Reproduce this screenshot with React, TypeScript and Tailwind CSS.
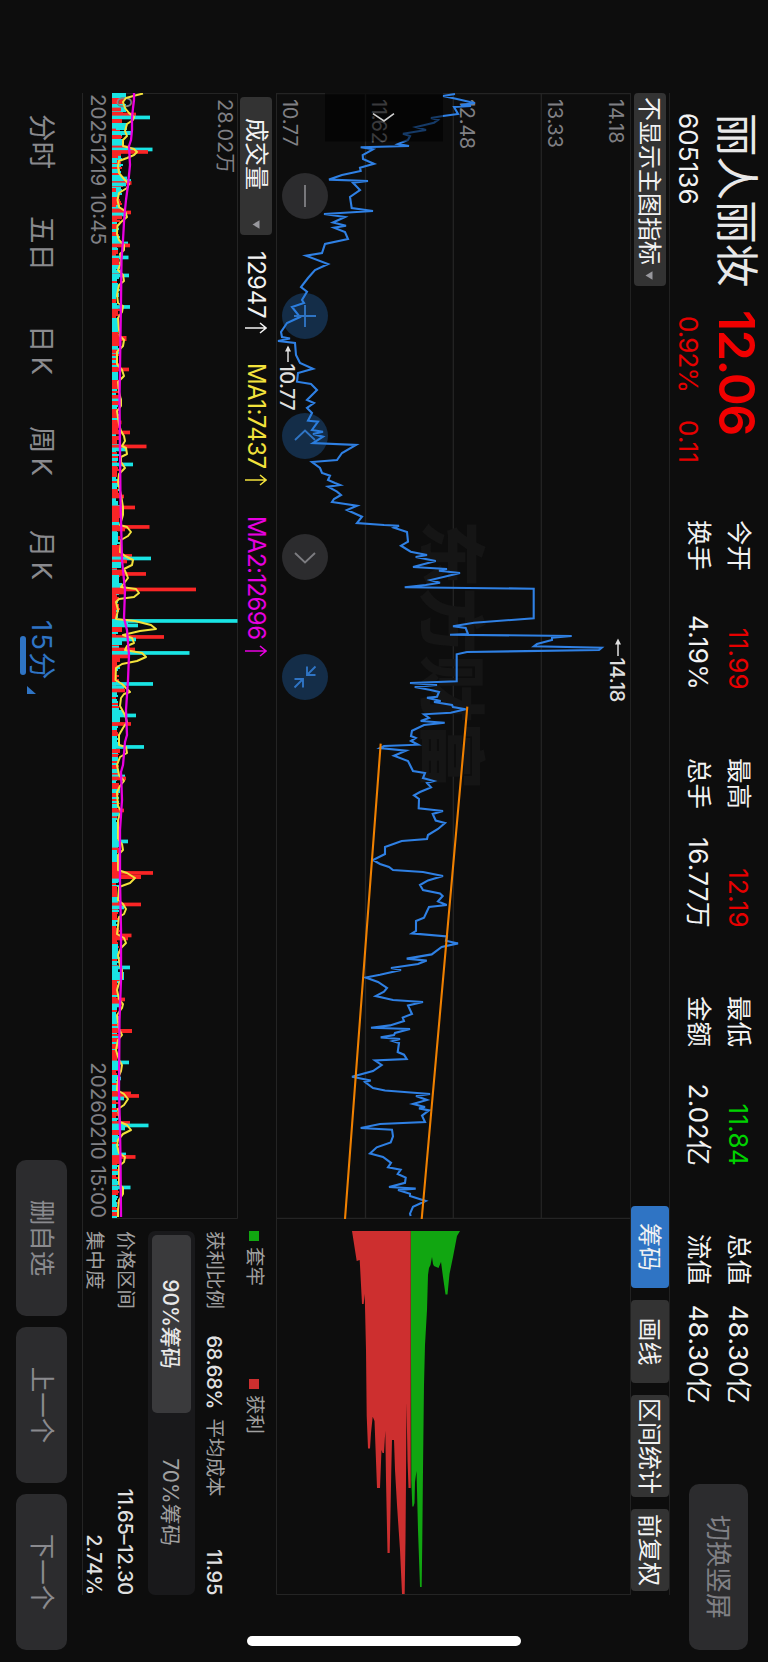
import React from 'react';

type Stat = {
  label: string;
  value: string;
  tone?: string;
};

// time offset, level
const PRICE_POINTS =
  '94,455 96,443 99,457 102,470 103,475 105,461 106,471 107,454 114,458 116,443 118,431 120,438 122.7,434 127,416 130,426 133.7,403 136,410 140,408 144,398 146,409 147.3,360.7 149.3,373 155,362.7 159,363 163.7,374 167.7,360 171,360.7 175,342 179.6,329 181,368 182.7,353 190,360 197,350 208,351.7 211,373 214,324 217,345 222.5,333 225.7,346 227.7,334 232,345 239,348 244,325 253,322 255.7,306 264,328 270,315 278,308 287,301 291.7,307 300,302 303,304 307,292 317,300 323,287 332,281 337,282 338.5,290 341,278 343,295 355,296 363,300 368.7,313 373,298 381.7,297 384,311 390,317 400,307 403,314 408,307 413,312 420.7,308 421.7,318 430,312 431.7,323 434,313 436.7,323 443,313 445,356 453,342 460,337 462,312 468,320 473,322 475.7,330 480,328 483,335 485,340 486.7,328 491.7,337 495,341 499,334 502,332 505.7,357 510,347 516.7,362 523,357 525,384 525.7,399 527.7,394 532,407 541.7,408 545.7,401 551.7,410.7 555,427 557,415.7 561,435.7 567,413 569,447 570.7,439 573,460 580,430.7 582.7,440 585,425.7 587.3,404.7 588.7,533.7 618.3,533.7 622.7,474 626.3,453 628,465.7 634,468 634.7,450 636,571.7 637.7,552 640,552 644,537 646.3,534 647.7,601.7 650,599 652,467 654.3,456.7 681.3,456.7 683,410 685,437 687,414.7 690,430.7 692,439 696.7,437 697.7,427 701,440.7 702,434 705,452 707,453 709.3,465.7 712.7,450.7 714.3,424 718,429 721,420.7 722.7,444.7 725,424 730.7,412 736,411 738,415.7 741,411 744.7,418 746,384 748,380 750.6,406 755.8,394 761,408 771,413 773,425 778,423 781,433.7 783,427 787.4,431 792,420 795.4,414 799,419 808.4,418.7 811,443 814,432.7 820.5,435.7 823,445 829,438 835,428 839,427 841,401.7 847,385 854,385 860,373 864,380 867,389 870,393 872,423 876,443 880.4,428 885,420 890,423 893.5,440 896,442.7 901.4,438 905,446.7 907,429 917.6,424 921,416 931,416 933.4,412 936.5,447 940.7,446 943.4,458 947,441.7 954.4,431.7 958.6,406.7 960.6,426.7 964,418 968,391 970,401 974.8,380 977.5,365.7 982,378 988,387 991.6,384 996,375.7 1000,393 1002,423 1005.4,408 1014,412 1017.5,402.7 1021,404 1025.4,390 1027.8,371 1029,410 1033,395 1035,394 1037.4,380.7 1039,400 1041,392.7 1043,399 1052,397.7 1054.7,404 1059,406.7 1060.5,375 1065,381.7 1071,373 1076.7,352 1080.5,370.7 1082,365 1088,373 1090.5,385 1094,430 1096,416 1100,427 1104,413 1107,425 1108.4,419 1110.4,429 1115.6,422 1122,425 1124,380 1128,360.7 1129.7,392 1136.3,393 1142.5,390.7 1147.3,376.7 1153.5,370 1157,383 1162.8,391 1167.3,388 1169.7,400.7 1174,397.7 1177.6,405.7 1182.8,405 1187,389 1188.6,415.7 1190,398 1193.8,410 1196,410 1201,425.7 1206.9,413 1213.7,410 1216,410.7';

const MA1_POINTS =
  '93.5,143 95,137 98,126 102,123 108,125 113,129 117,134 120,133 124,127 131,125 136,127 140,123 146,123 149,134 152,137 155,134 158,127 161,119 166,118 173,119 179,124 184,129 188,127 193,119 200,117.5 207,119 211,125 217,127 222,121 226,117.5 234,117 240,119 245,124 250,124 254,120 258,121 265,120 270,118 275,123 281,124 285,119 295,117 303,118 306,123 312,122 318,118 330,119 336,120 340,124 346,123 352,117 364,117 370,122 376,124 382,118 392,119 400,121 406,121 411,117 424,119 431,121 436,124 441,125 446,122 448,126 454,127 457,121 462,121 468,125 474,119 482,118 495,121 507,123 515,123 525,120 527,127 532,131 536,128 540,121 552,120 556,125 560,133 565,132 569,124 573,126 578,128 582,125 587,121 589,136 593,139 597,134 599,119 602,116 610,118 619,116 621,135 625,151 629,156 631,140 635,123 638,132 643,134 646,127 650,125 653,142 657,146 661,137 664,122 668,116 680,115.5 684,122 688,126 692,130 694,124 698,121 706,120 715,125 722,127 728,123 735,119 745,119 747,126 753,127 757,120 765,117 775,119 781,124 786,120 792,117 806,118 811,121 820,118 839,118 844,122 850,123 855,118 870,118 873,127 878,135 883,130 887,119 900,118 904,123 909,126 914,124 917,119 934,117 938,124 943,126 948,121 955,118 966,120 970,122 978,122 983,119 990,117 999,119 1004,123 1008,122 1015,117 1029,119 1035,122 1040,118 1050,116 1060,119 1065,122 1071,121 1078,118 1090,117 1094,124 1099,128 1105,124 1109,118 1122,120 1125,127 1130,131 1134,123 1140,118 1145,117 1153,119 1157,125 1162,124 1166,119 1184,119 1188,123 1194,123 1200,119 1210,118 1217,118';

const MA2_POINTS =
  '93,134 100,134 108,133 118,132 130,132 140,131 146,129 165,130 185,128 200,126 210,125 222,124 240,123 260,121.5 300,121 400,119.5 500,120.5 560,122 590,125 618,124 630,127 655,129 680,128 710,126 735,127 742,125 765,123 772,121 800,122 830,120 880,120 930,121 980,121 1020,119.5 1090,119 1130,120 1160,120.5 1217,121';

const TRAPPED_POINTS =
  '1231,410.7 1231,460 1236,457 1257,453 1274,449.5 1294.5,447.5 1294.5,445.5 1277,443 1262,441 1268,438.5 1266,434 1264,433 1257,432 1265,430.5 1268,429 1275,428 1310,427 1345,425 1385,424 1410,423.7 1470,423 1540,422.3 1587,421.7 1587,420 1530,418 1471,416.5 1482,415 1503,414.5 1506.5,413.5 1506.5,412.3 1480,411.3';

const PROFIT_POINTS =
  '1231,410.7 1488,410.7 1488,408.5 1460,407.5 1403,406.5 1480,406 1540,405.5 1594,404.7 1594,402 1550,400 1505,397 1470,395 1440,394 1440,392 1470,391.3 1553,389.7 1553,387.5 1480,386 1431,385.3 1453,384 1453,382.5 1450,381.5 1488,380 1488,377 1421,374.5 1416.7,372.7 1433,371 1448.5,370 1448.5,368 1416,366.7 1350,366 1294,364.7 1304,363.7 1304,362 1260,359.7 1261,356.7 1231,352';

const RISE = '#fa2525';
const FALL = '#19e4e4';

// [offset, width, height, rising]
const VOLUME_RUNS: [number, number, number, boolean][] = [
  [93, 5, 14, false], [98, 6, 12, true], [104, 8, 14, false], [108, 2, 9, true], [113, 2, 24, true],
  [116, 3, 38, false], [119, 4, 10, true], [123, 7, 15, false], [129, 2, 4, true], [131, 4, 19, false],
  [135, 4, 9, true], [139, 7, 11, false], [146, 2, 16, true], [148, 3, 40.5, false], [150.5, 2, 36, true],
  [152.5, 3, 9, true], [155, 3, 6, true], [158, 5, 5, false], [177, 3, 15, false], [179.5, 2, 19, false],
  [181.5, 2, 19.5, true], [183, 3, 14, false], [188, 4, 4, true], [200, 7, 4, true], [209, 3, 14, true],
  [211, 2, 19, true], [213, 3, 15, false], [216, 3, 10, true], [224, 5, 6, true], [242, 2, 16, false],
  [244, 2.5, 18, true], [256, 2.5, 16.5, false], [258, 7, 7, true], [270, 3, 9, false], [274, 3, 17, false],
  [305.5, 3, 18, false], [309, 7, 6, true], [320, 12, 6, false], [336, 5, 14.5, true], [341, 3, 8, true],
  [350, 3, 5, true], [368, 3, 17, true], [372, 8, 6, false], [383, 6, 6, true], [399, 3, 10, false],
  [401, 4, 7, true], [411, 7, 5, true], [421, 2.5, 9.5, true], [431, 3, 18, true], [445, 3, 34.5, true],
  [448, 3, 15, false], [463, 3, 21, false], [466, 9, 5, true], [489, 6, 6, true], [495, 2, 12, true],
  [506, 2.5, 23, true], [508, 8, 8, true], [525.5, 2.5, 37.5, true], [528, 3, 13, true], [532, 10, 6, false],
  [545, 10, 8, true], [554.5, 2.5, 20, true], [557, 3, 39, false], [560, 3, 15, true], [562, 6, 9, false],
  [570, 3, 14, true], [572.5, 3, 34, true], [575, 8, 7, false], [583, 5, 10, false], [588, 3, 84, true],
  [591, 3, 12, true], [593, 27, 4, true], [604, 6, 7, true], [619, 8, 16, false], [619.5, 3, 125.5, false],
  [624, 3, 26, false], [627, 5, 10, true], [635.5, 3, 52, true], [638, 3, 24, false], [641, 4, 10, false],
  [648, 3, 23, true], [651, 5, 18, false], [651.5, 3, 77.5, false], [655, 3, 17, true], [658, 4, 8, true],
  [660, 23, 4, true], [682.5, 3, 41, false], [686, 4, 12, false], [689, 3, 13, true], [710, 7, 11, false],
  [714, 3, 24, false], [717, 5, 8, false], [722.5, 2.5, 19, true], [745.5, 3, 32, false], [749, 4, 8, true],
  [775, 2, 13, false], [777, 3, 14, true], [809, 2.5, 12, true], [813, 3, 7, false], [822, 16, 5, false],
  [840, 3, 16, false], [843, 4, 7, false], [848, 3, 9, true], [850, 12, 5, false], [862, 10, 5, true],
  [871.5, 3, 41, true], [875, 4, 29, true], [879, 3, 9, false], [886, 10, 5, true], [897, 6, 6, false],
  [903, 3, 29, true], [906, 3, 12, false], [934, 3, 19.5, true], [937, 3, 16, true], [945, 14, 6, false],
  [966, 3, 18, false], [972, 8, 12, false], [980, 11, 5, true], [998, 3, 13, true], [1001, 4, 10, true],
  [1004, 3, 8, false], [1029, 4, 20, true], [1050, 9, 5, true], [1061, 3, 17, false], [1064, 6, 7, false],
  [1077, 2, 9, false], [1092, 2.5, 19, true], [1094.5, 3, 27, true], [1097, 3, 12, false], [1121.5, 2, 18, true],
  [1124, 3, 36.5, false], [1127, 3, 13, false], [1130, 5, 8, true], [1144, 10, 6, false], [1153, 2, 14, false],
  [1155.5, 3, 23.5, true], [1158, 6, 8, true], [1186, 3, 18.5, false], [1190, 5, 6, true], [1202, 5, 5, false],
];

const seededBars = () => {
  let seed = 7;
  const next = () => {
    seed = (seed * 1103515245 + 12345) % 2147483648;
    return seed / 2147483648;
  };
  return Array.from({ length: 574 }, (_, i) => {
    const early = i < 60 ? 3 : 0;
    return { x: 93 + i * 1.96, h: 4 + early + next() * 4, up: next() > 0.48 };
  });
};

const BARS = seededBars();

const STATS: [Stat, Stat][] = [
  [{ label: '今开', value: '11.99', tone: 'text-[#e60000]' }, { label: '换手', value: '4.19%' }],
  [{ label: '最高', value: '12.19', tone: 'text-[#e60000]' }, { label: '总手', value: '16.77万' }],
  [{ label: '最低', value: '11.84', tone: 'text-[#00d200]' }, { label: '金额', value: '2.02亿' }],
  [{ label: '总值', value: '48.30亿' }, { label: '流值', value: '48.30亿' }],
];

const Caret: React.FC = () => (
  <svg width="9" height="8" viewBox="0 0 9 8" className="fill-[#98989d]">
    <path d="M0.3 0.5h8.4L4.5 7.5z" />
  </svg>
);

const Arrow: React.FC = () => (
  <svg
    width="12"
    height="22"
    viewBox="0 0 12 22"
    fill="none"
    stroke="currentColor"
    strokeWidth="1.5"
    className="ml-1 inline align-[-3px]"
  >
    <path d="M6 22V1M1 7L6 1L11 7" />
  </svg>
);

const Header: React.FC = () => (
  <header className="flex h-[98px] pl-[113px]">
    <div className="w-[197px] shrink-0">
      <div className="flex h-[60px] items-center pt-[3px] text-[43.6px] leading-none text-[#e8e8e8]">丽人丽妆</div>
      <div className="flex h-[38px] items-center pt-0.5 text-[26px] leading-none tracking-[0.1px]">605136</div>
    </div>
    <div className="w-[210px] shrink-0 text-[#f00000]">
      <div className="flex h-[60px] items-center pt-0.5 text-[50px] font-semibold leading-none tracking-[-1.4px]">12.06</div>
      <div className="flex h-[38px] items-center gap-[28px] pl-1.5 pt-0.5 text-[26px] leading-none text-[#e60000]">
        <span className="tracking-[-0.9px]">0.92%</span>
        <span className="tracking-[0.3px]">0.11</span>
      </div>
    </div>
    <div className="flex gap-[70px] pt-[9px] text-[25.5px] leading-none">
      {STATS.map((pair) => (
        <div key={pair[0].label} className="w-[168px]">
          {pair.map((stat) => (
            <div key={stat.label} className="flex h-10 items-center justify-between whitespace-nowrap">
              <span>{stat.label}</span>
              <span className={`-mr-0.5 pt-0.5 text-[26px] tracking-[0.3px] ${stat.tone ?? ''}`}>{stat.value}</span>
            </div>
          ))}
        </div>
      ))}
    </div>
    <button className="ml-auto mr-3 mt-5 h-[59px] w-[166px] rounded-[10px] bg-[#2c2c2e] text-[26px] leading-none text-[#808085]">
      切换竖屏
    </button>
  </header>
);

const Toolbar: React.FC = () => (
  <div className="ml-[93px] flex h-10 w-[1502px] items-center justify-between border-y border-[#212121]">
    <button className="flex h-8 w-[193px] items-center gap-1.5 whitespace-nowrap rounded-[4px] bg-[#333333] pl-1 pt-px text-[24px] leading-none">
      不显示主图指标
      <Caret />
    </button>
    <div className="mr-1 flex gap-3 text-[24px] leading-none">
      <button className="h-[38px] w-[82px] rounded-[4px] bg-[#2f74c4] pt-px">筹码</button>
      <button className="h-[38px] w-[83px] rounded-[4px] bg-[#333333] pt-px">画线</button>
      <button className="h-[38px] w-[102px] rounded-[4px] bg-[#333333] pt-px">区间统计</button>
      <button className="h-[38px] w-[82px] rounded-[4px] bg-[#333333] pt-px">前复权</button>
    </div>
  </div>
);

const CONTROLS = [
  { name: 'zoom-out', active: false, path: 'M-11 0H11' },
  { name: 'zoom-in', active: true, path: 'M-11 0H11M0 -11V11' },
  { name: 'previous', active: true, path: 'M4 -10L-5.5 0L4 10' },
  { name: 'next', active: false, path: 'M-4 -10L5.5 0L-4 10' },
  {
    name: 'collapse',
    active: true,
    path: 'M-10.5 -10.5L-2 -2M-2 -10.5V-2H-10.5M10.5 10.5L2 2M2 10.5V2H10.5',
  },
];

const PriceChart: React.FC = () => (
  <div className="relative h-[354px] w-[1126px]">
    <svg viewBox="93 0 1126 354" className="absolute inset-0 h-full w-full">
      <g className="stroke-[#242424]" strokeWidth="1.3">
        <path d="M93.5 0V354M1218.5 0V354M93 88.7H1219M93 176.7H1219M93 264.5H1219M93 353.6H1219" fill="none" />
      </g>
      <text x="520" y="203" fontSize="67.5" fontWeight="900" fill="#151515">
        东方财富
      </text>
    </svg>

    {/* Price scale, each label sits on its grid line */}
    <div className="absolute left-1.5 top-1 flex flex-col text-[20px] leading-5 text-[#808085]">
      <span className="h-[61px] tracking-[-0.1px]">14.18</span>
      <span className="h-[88px] tracking-[-0.3px]">13.33</span>
      <span className="h-[88px] tracking-[-0.3px]">12.48</span>
      <span className="h-[89px] tracking-[-0.3px]">11.62</span>
      <span className="tracking-[-0.3px]">10.77</span>
    </div>

    <svg viewBox="93 0 1126 354" className="absolute inset-0 h-full w-full">
      <g transform="translate(0 630) scale(1 -1)" fill="none">
        <polyline points={PRICE_POINTS} stroke="#2f80e4" strokeWidth="2.1" />
        <path d="M706.7 467.3L1219 421.7M743.7 380.7L1219 345" stroke="#f08000" strokeWidth="2.1" />
      </g>
      <g stroke="#dedede" strokeWidth="1.5" fill="#dedede">
        <path d="M641 12H656M347 342H362" />
        <path d="M638.5 12l6-3v6zM345.5 342l6-3v6z" stroke="none" />
      </g>
      <g fontSize="20" fontWeight="500" fill="#dedede">
        <text x="657.5" y="20" letterSpacing="-0.3">14.18</text>
        <text x="363.5" y="350" letterSpacing="-0.6">10.77</text>
      </g>
      <rect x="93" y="187" width="48.5" height="118" fill="#000" fillOpacity="0.55" />
      <path d="M113.7 236L121 246L113.7 257" fill="none" stroke="#d0d0d0" strokeWidth="1.6" />
    </svg>

    {/* Chart controls */}
    <div className="absolute left-[80px] top-[302px] flex gap-[74.2px]">
      {CONTROLS.map((control) => (
        <button
          key={control.name}
          aria-label={control.name}
          className={`h-[46px] w-[46px] rounded-full ${
            control.active ? 'bg-[#2378d2]/30' : 'bg-[#2c2c2e]'
          }`}
        >
          <svg
            viewBox="-23 -23 46 46"
            fill="none"
            strokeWidth="1.9"
            className={control.active ? 'stroke-[#2f74c4]' : 'stroke-[#7c7c80]'}
          >
            <path d={control.path} />
          </svg>
        </button>
      ))}
    </div>
  </div>
);

const VolumeSection: React.FC = () => (
  <div className="w-[1126px]">
    <div className="flex h-[38px] items-center whitespace-nowrap pl-1 pt-px text-[24px] leading-none">
      <button className="flex h-8 w-[138px] items-center justify-between rounded-[4px] bg-[#333333] pl-[21px] pr-1.5">
        成交量
        <Caret />
      </button>
      <span className="ml-4 w-[112px] tracking-[-0.2px]">12947<Arrow /></span>
      <span className="w-[153px] tracking-[-0.6px] text-[#f3e23c]">MA1:7437<span className="inline-block w-0.5" /><Arrow /></span>
      <span className="tracking-[-0.6px] text-[#e800e0]">MA2:12696<span className="inline-block w-0.5" /><Arrow /></span>
    </div>
    <div className="relative h-[126px]">
      <svg viewBox="93 0 1126 126" className="absolute inset-0 h-full w-full">
        <path d="M93.5 126V0.5H1218.5V126" fill="none" stroke="#242424" />
        <g transform="translate(0 126) scale(1 -1)" shapeRendering="crispEdges">
          {BARS.map((bar) => (
            <rect key={bar.x} x={bar.x} y="0" width="1.96" height={bar.h} fill={bar.up ? RISE : FALL} />
          ))}
        </g>
        <g transform="translate(0 126) scale(1 -1)">
          {VOLUME_RUNS.map(([x, width, height, up]) => (
            <rect
              key={`${x}-${height}`}
              x={width > 3 ? x : x - 0.4}
              y="0"
              width={Math.max(width, 3.7)}
              height={height}
              fill={up ? RISE : FALL}
            />
          ))}
        </g>
        <text x="96" y="121" fontSize="20" fill="#808085">0</text>
        <g transform="translate(0 238) scale(1 -1)" fill="none" strokeLinejoin="round">
          <polyline points={MA1_POINTS} stroke="#f3e23c" strokeWidth="2" />
          <polyline points={MA2_POINTS} stroke="#e800e0" strokeWidth="2.3" />
        </g>
      </svg>
      <span className="absolute left-1.5 top-[3px] text-[20px] leading-none text-[#808085]">28.02万</span>
    </div>
    <div className="flex h-[28px] items-center justify-between px-px text-[20.5px] leading-none text-[#808085]">
      <span>20251219 10:45</span>
      <span>20260210 15:00</span>
    </div>
  </div>
);

const ChipPanel: React.FC = () => (
  <aside className="w-[376px]">
    <svg width="376" height="354" viewBox="1219 0 376 354">
      <path d="M1219 353.5H1594.5V0" fill="none" stroke="#242424" />
      <g transform="translate(0 630) scale(1 -1)">
        <polygon points={TRAPPED_POINTS} fill="#11a611" />
        <polygon points={PROFIT_POINTS} fill="#cd2f2f" />
      </g>
    </svg>
    <div className="pl-3 text-[19.5px] leading-none text-[#a0a0a0]">
      <div className="flex h-[42px] items-center pt-0.5">
        <span className="mr-1.5 h-2.5 w-2.5 bg-[#11a611]" />
        <span className="w-[132px]">套牢</span>
        <span className="mr-1.5 h-2.5 w-2.5 bg-[#cd2f2f]" />
        <span>获利</span>
      </div>
      <div className="flex h-[39px] items-center justify-between">
        <span>获利比例</span>
        <span className="ml-[17px] text-[20px] font-medium tracking-[-0.3px] text-[#e0e0e0]">68.68%</span>
        <span className="mr-[43px]">平均成本</span>
        <span className="text-[20px] font-medium tracking-[-0.3px] text-[#e0e0e0]">11.95</span>
      </div>
      <div className="flex h-[47px] items-center rounded-[7px] bg-[#19191b] p-1 text-[21px]">
        <button className="h-full w-[178px] rounded-[5px] bg-[#3a3a3c] pt-px font-medium text-[#e8e8e8]">90%筹码</button>
        <button className="h-full flex-1 pt-px">70%筹码</button>
      </div>
      <div className="flex h-[44px] items-center justify-between pt-px">
        <span>价格区间</span>
        <span className="text-[20px] font-medium tracking-[-0.2px] text-[#e0e0e0]">11.65–12.30</span>
      </div>
      <div className="flex h-5 items-center justify-between">
        <span>集中度</span>
        <span className="text-[20px] font-medium tracking-[-0.1px] text-[#e0e0e0]">2.74%</span>
      </div>
    </div>
  </aside>
);

const Footer: React.FC = () => (
  <footer className="flex h-[82px] items-center pb-0.5 pl-[114px] pr-3 text-[27.5px] leading-none text-[#8a8a8e]">
    <nav className="flex items-center whitespace-nowrap pt-0.5">
      <span className="w-[102px]">分时</span>
      <span className="w-[109px]">五日</span>
      <span className="flex w-[101px] gap-1">日<span>K</span></span>
      <span className="flex w-[104px] gap-1">周<span>K</span></span>
      <span className="flex w-[90px] gap-1">月<span>K</span></span>
      <span className="relative text-[#2f74c4]">
        <span className="tracking-[2px]">15</span>分
        <span className="absolute -bottom-[7px] left-4 h-[5.5px] w-[39px] rounded-full bg-[#2f74c4]" />
        <svg width="8" height="9" viewBox="0 0 8 9" className="absolute -right-[15px] bottom-0 fill-[#2f74c4]">
          <path d="M8 0V9H0z" />
        </svg>
      </span>
    </nav>
    <div className="ml-auto flex gap-[11px] text-[25.5px]">
      {['删自选', '上一个', '下一个'].map((label) => (
        <button key={label} className="h-[51px] w-[156px] rounded-[10px] bg-[#2c2c2e]">
          {label}
        </button>
      ))}
    </div>
  </footer>
);

const App: React.FC = () => {
  return (
    <div className="h-[1663px] w-[768px] overflow-hidden bg-white">
      {/* Landscape screen turned clockwise */}
      <div className="relative h-[768px] w-[1662px] origin-top-left translate-x-[768px] rotate-90 bg-[#0d0d0d] font-[Inter,'Noto_Sans_CJK_SC',sans-serif] text-[#f2f2f2]">
        <Header />
        <Toolbar />
        <div className="ml-[93px] flex h-[548px] w-[1502px] border-b border-[#242424]">
          <div>
            <PriceChart />
            <VolumeSection />
          </div>
          <ChipPanel />
        </div>
        <Footer />
        <div className="absolute right-4 top-[247px] h-[274px] w-2.5 rounded-full bg-white" />
      </div>
    </div>
  );
};

export default App;
